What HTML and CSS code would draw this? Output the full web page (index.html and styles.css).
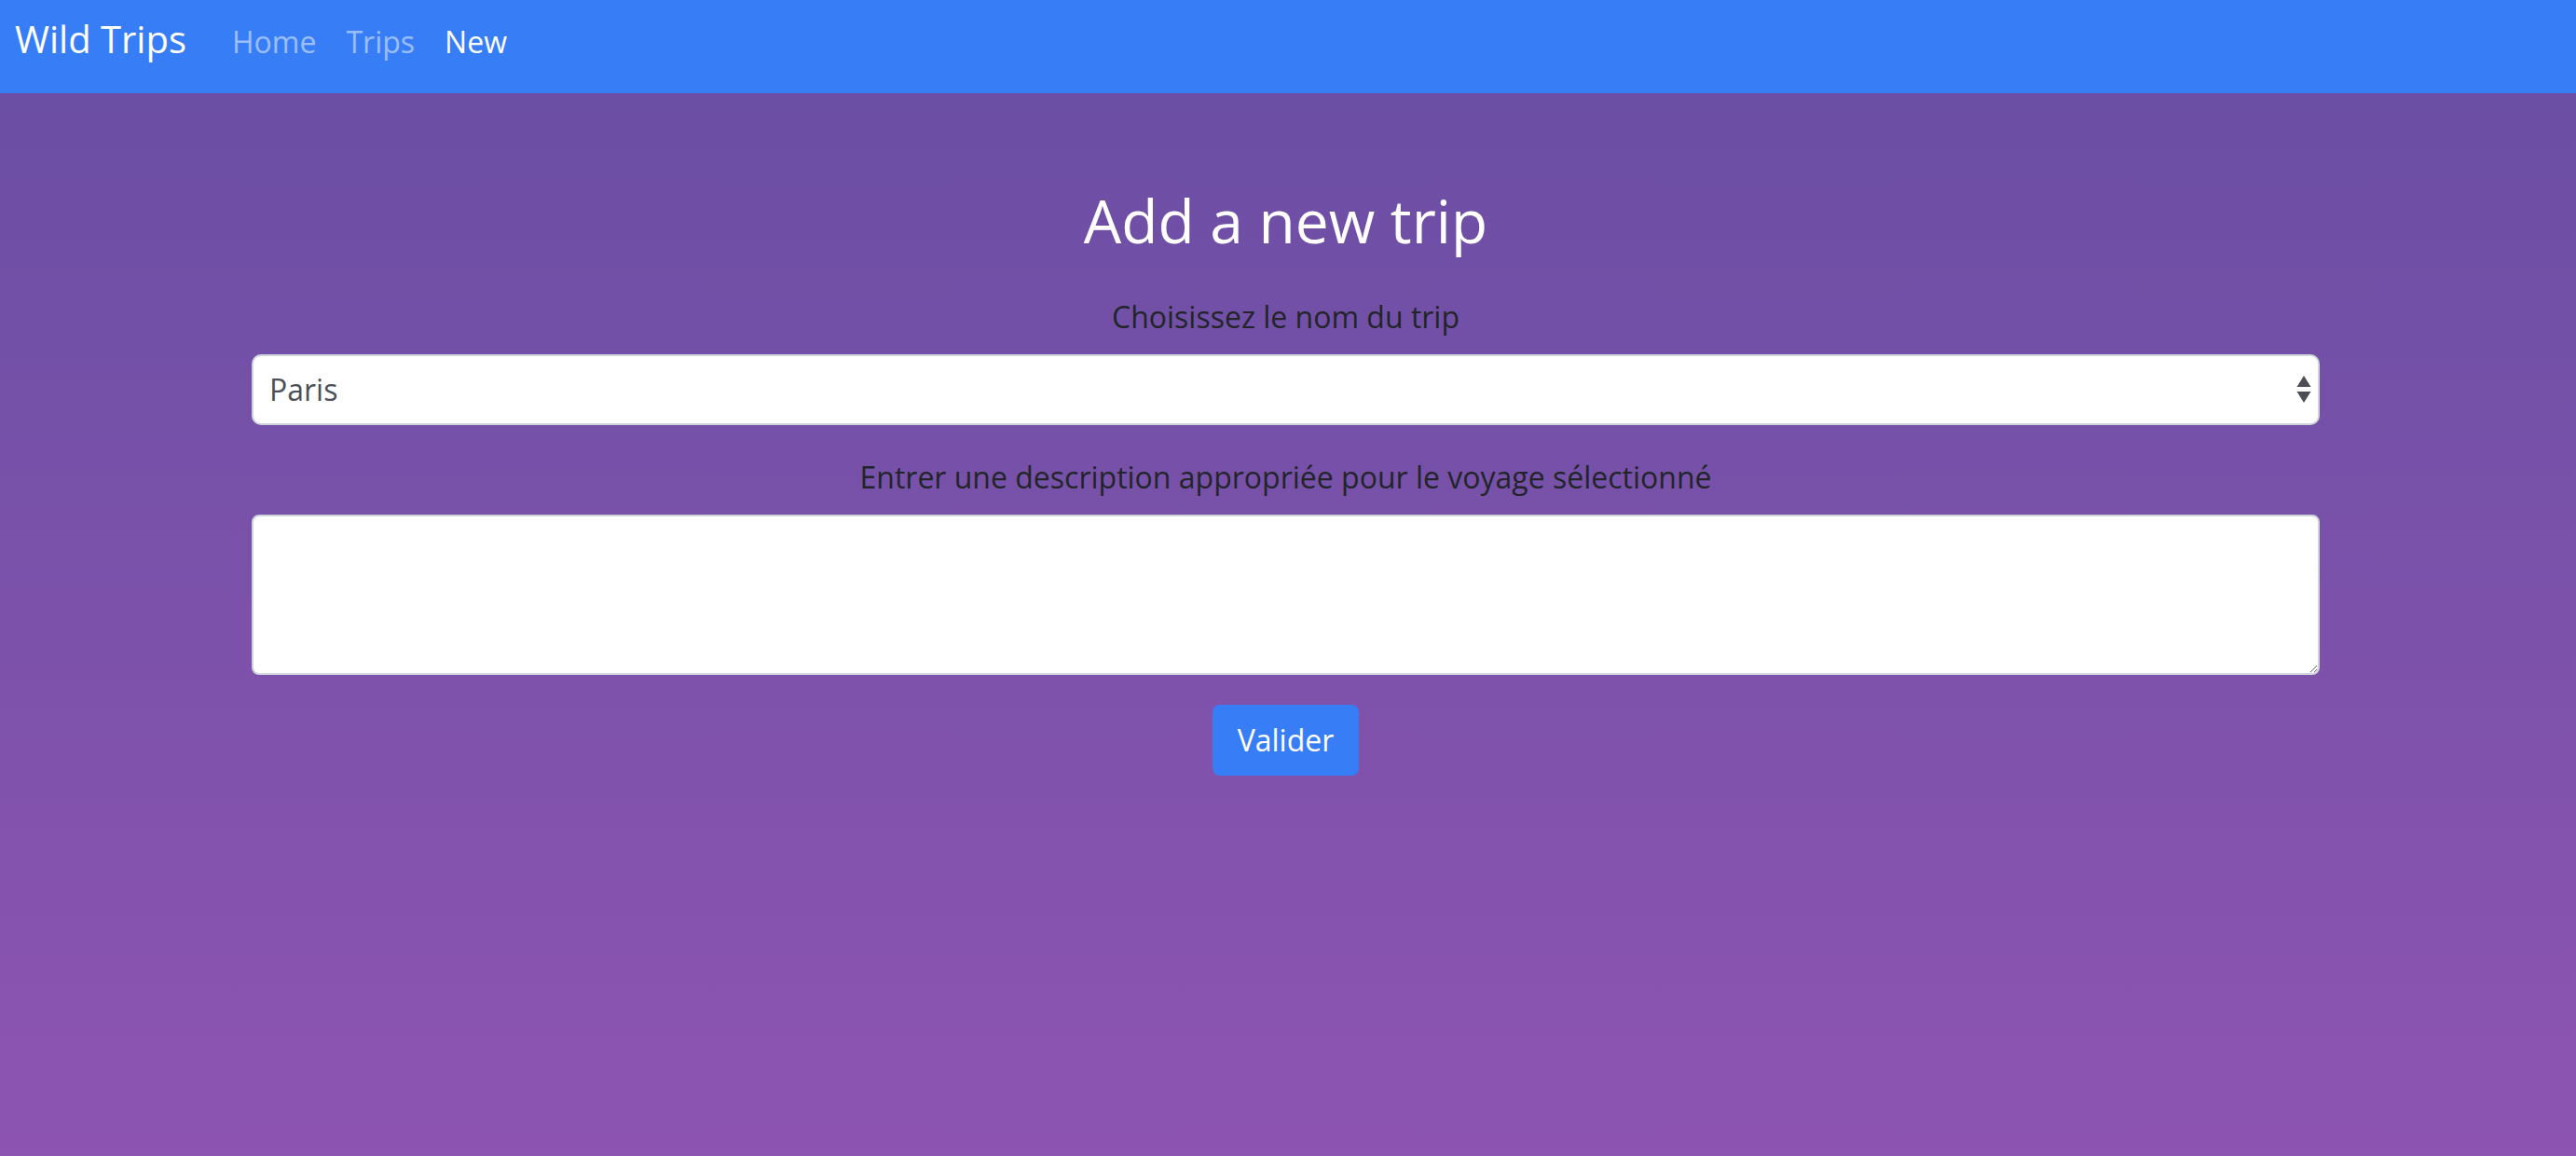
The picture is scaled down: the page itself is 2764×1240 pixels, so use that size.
FILE: index.html
```html
<!DOCTYPE html>
<html lang="fr">
<head>
<meta charset="utf-8">
<title>Wild Trips</title>
<link rel="stylesheet" href="styles.css">
</head>
<body>
<nav class="navbar">
  <a class="brand" href="#">Wild Trips</a>
  <ul class="nav-links">
    <li><a class="nav-link" href="#">Home</a></li>
    <li><a class="nav-link" href="#">Trips</a></li>
    <li><a class="nav-link active" href="#">New</a></li>
  </ul>
</nav>
<main class="page">
  <h1 class="title">Add a new trip</h1>
  <form class="trip-form">
    <div class="form-group">
      <label class="form-label" for="trip">Choisissez le nom du trip</label>
      <div class="select-wrap">
        <select id="trip" class="form-select">
          <option>Paris</option>
          <option>Londres</option>
          <option>Berlin</option>
        </select>
        <svg class="select-arrows" width="16" height="30" viewBox="0 0 16 30" aria-hidden="true">
          <polygon points="8,0 15.5,12 0.5,12" fill="#4b4f55"/>
          <polygon points="0.5,17 15.5,17 8,29" fill="#4b4f55"/>
        </svg>
      </div>
    </div>
    <div class="form-group">
      <label class="form-label" for="desc">Entrer une description appropriée pour le voyage sélectionné</label>
      <textarea id="desc" class="form-textarea" rows="3"></textarea>
    </div>
    <div class="actions">
      <button type="submit" class="btn">Valider</button>
    </div>
  </form>
</main>
</body>
</html>
```
FILE: styles.css
```css
* { box-sizing: border-box; }
html, body { margin: 0; padding: 0; }
body {
  font-family: "Open Sans", "Noto Sans", sans-serif;
  min-height: 100vh;
  display: flex;
  flex-direction: column;
  background: #8c54b1;
}
.navbar {
  height: 100px;
  background: #377ef6;
  display: flex;
  align-items: baseline;
  padding: 12px 16px 0 16px;
}
.brand {
  font-size: 40px;
  line-height: 60px;
  color: #fff;
  text-decoration: none;
  margin-right: 33px;
}
.nav-links {
  list-style: none;
  margin: 0;
  padding: 0;
  display: flex;
  align-items: baseline;
}
.nav-link {
  display: block;
  font-size: 32px;
  line-height: 48px;
  padding: 0 16px;
  color: rgba(255, 255, 255, 0.5);
  text-decoration: none;
}
.nav-link.active { color: #fff; }

.page {
  flex: 1;
  background: linear-gradient(180deg, #6b4fa4 0%, #8d54b1 100%);
  padding: 99px 275px 40px 270px;
}
.title {
  margin: 0 0 40px;
  text-align: center;
  color: #fff;
  font-weight: 400;
  font-size: 64px;
  line-height: 1.2;
}
.trip-form { display: flex; flex-direction: column; }
.form-group {
  display: flex;
  flex-direction: column;
  margin-bottom: 32px;
}
.form-label {
  text-align: center;
  font-size: 32px;
  line-height: 48px;
  color: #212529;
  margin-bottom: 16px;
}
.select-wrap { position: relative; }
.form-select {
  -webkit-appearance: none;
  appearance: none;
  width: 100%;
  height: 76px;
  font-family: inherit;
  font-size: 32px;
  color: #495057;
  background: #fff;
  border: 2px solid #ced4da;
  border-radius: 10px;
  padding: 0 50px 0 17px;
  outline: none;
}
.select-arrows {
  position: absolute;
  right: 9px;
  top: 23px;
  pointer-events: none;
}
.form-textarea {
  width: 100%;
  height: 172px;
  font-family: inherit;
  font-size: 32px;
  color: #495057;
  background: #fff;
  border: 2px solid #ced4da;
  border-radius: 8px;
  padding: 12px 24px;
  resize: vertical;
  outline: none;
}
.actions { display: flex; justify-content: center; }
.btn {
  font-family: inherit;
  font-size: 32px;
  line-height: 48px;
  color: #fff;
  background: #377ef6;
  border: 2px solid #377ef6;
  border-radius: 8px;
  padding: 12px 25px;
  cursor: pointer;
}
```
